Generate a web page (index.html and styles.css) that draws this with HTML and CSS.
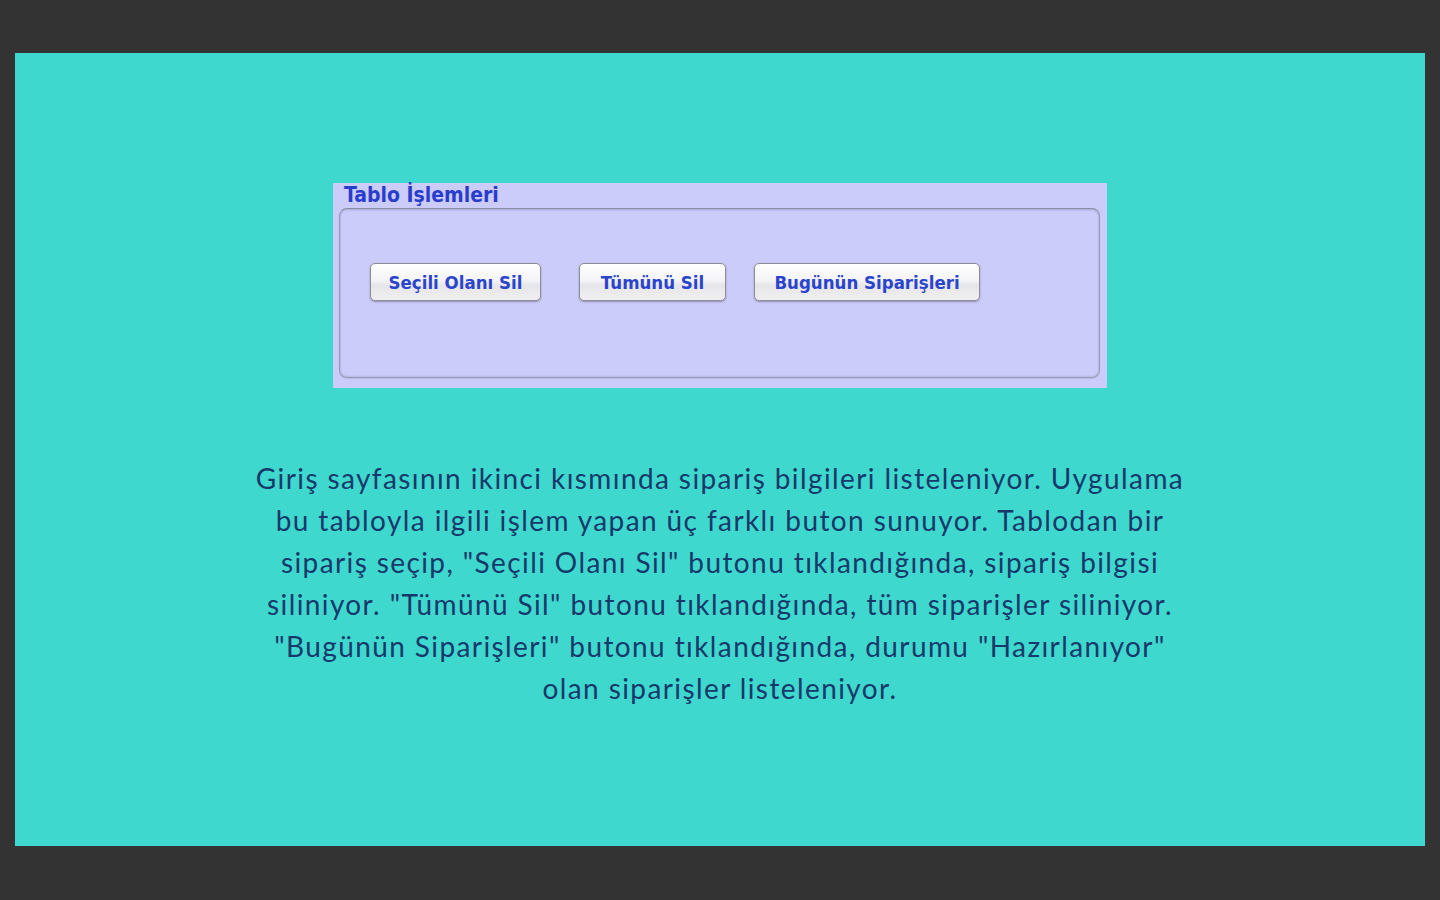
FILE: index.html
```html
<!DOCTYPE html>
<html lang="tr">
<head>
<meta charset="utf-8">
<title>Tablo İşlemleri</title>
<link rel="stylesheet" href="styles.css">
</head>
<body>
<div class="slide">
  <div class="panel">
    <div class="panel-title">Tablo İşlemleri</div>
    <div class="group">
      <div class="btn-row">
        <button class="btn btn-1">Seçili Olanı Sil</button>
        <button class="btn btn-2">Tümünü Sil</button>
        <button class="btn btn-3">Bugünün Siparişleri</button>
      </div>
    </div>
  </div>
  <p class="desc">Giriş sayfasının ikinci kısmında sipariş bilgileri listeleniyor. Uygulama<br>bu tabloyla ilgili işlem yapan üç farklı buton sunuyor. Tablodan bir<br>sipariş seçip, "Seçili Olanı Sil" butonu tıklandığında, sipariş bilgisi<br>siliniyor. "Tümünü Sil" butonu tıklandığında, tüm siparişler siliniyor.<br>"Bugünün Siparişleri" butonu tıklandığında, durumu "Hazırlanıyor"<br>olan siparişler listeleniyor.</p>
</div>
</body>
</html>
```
FILE: styles.css
```css
html, body {
  margin: 0;
  padding: 0;
  background: #333333;
  width: 1440px;
  height: 900px;
  overflow: hidden;
}
.slide {
  margin: 53px 0 0 15px;
  width: 1410px;
  height: 793px;
  background: #3ed8cf;
  display: flex;
  flex-direction: column;
  align-items: center;
  box-sizing: border-box;
  padding-top: 130px;
}
.panel {
  width: 774px;
  height: 205px;
  background: #ccccfa;
  box-sizing: border-box;
  padding: 0 7px 10px 6px;
  display: flex;
  flex-direction: column;
}
.panel-title {
  font-family: "DejaVu Sans Condensed", "DejaVu Sans", sans-serif;
  font-weight: bold;
  font-size: 21px;
  color: #2a3ccc;
  height: 25px;
  line-height: 25px;
  padding-left: 5px;
}
.group {
  flex: 1;
  border: 1px solid #9a9ab4;
  border-top-color: #8c8ca6;
  border-radius: 8px;
  box-shadow: inset 0 1px 2px rgba(60,60,100,0.25), inset 0 -1px 2px rgba(60,60,100,0.12), 0 1px 1px rgba(60,60,100,0.12);
  box-sizing: border-box;
  padding: 54px 0 0 30px;
}
.btn-row {
  display: flex;
  align-items: center;
}
.btn {
  height: 38px;
  box-sizing: border-box;
  border: 1px solid #8c8c96;
  border-radius: 5px;
  background: linear-gradient(#ffffff 0%, #f4f4f6 45%, #e6e6ea 60%, #f0f0f2 100%);
  box-shadow: 0 1px 2px rgba(0,0,0,0.3);
  font-family: "DejaVu Sans Condensed", "DejaVu Sans", sans-serif;
  font-size: 18.5px;
  font-weight: bold;
  color: #2a44cc;
  padding: 0;
  text-align: center;
}
.btn-1 { width: 171px; }
.btn-2 { width: 147px; margin-left: 38px; }
.btn-3 { width: 226px; margin-left: 28px; }
.desc {
  margin: 69px 0 0 0;
  font-family: "Lato", sans-serif;
  font-size: 28px;
  letter-spacing: 1.4px;
  line-height: 42px;
  color: #17396a;
  text-align: center;
  white-space: nowrap;
}
```
